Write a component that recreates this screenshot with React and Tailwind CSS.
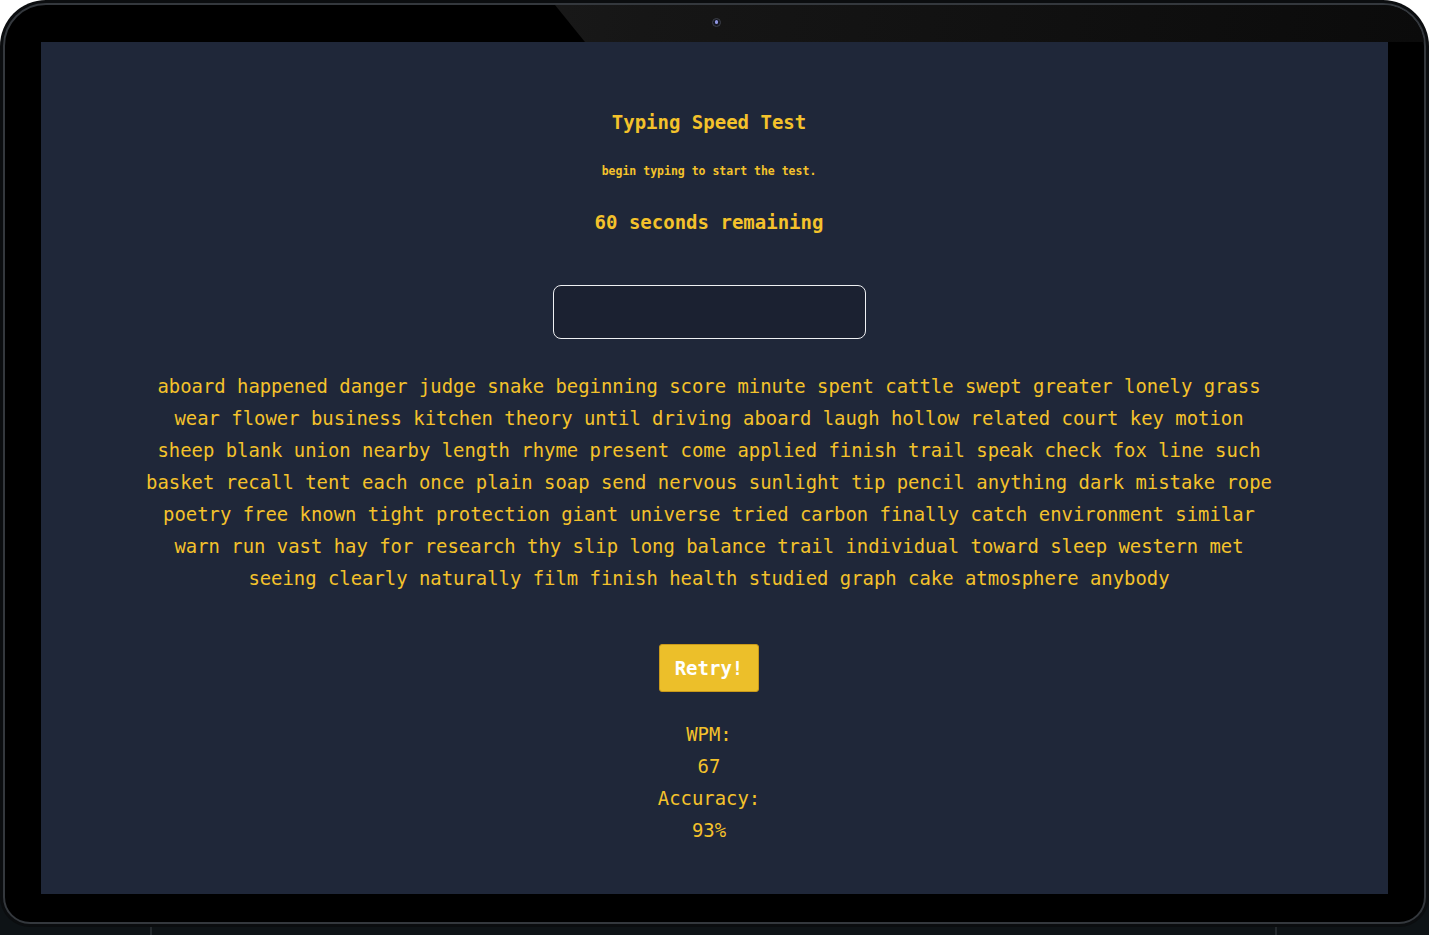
import React from 'react';

const WORDS =
  'aboard happened danger judge snake beginning score minute spent cattle swept greater lonely grass wear flower business kitchen theory until driving aboard laugh hollow related court key motion sheep blank union nearby length rhyme present come applied finish trail speak check fox line such basket recall tent each once plain soap send nervous sunlight tip pencil anything dark mistake rope poetry free known tight protection giant universe tried carbon finally catch environment similar warn run vast hay for research thy slip long balance trail individual toward sleep western met seeing clearly naturally film finish health studied graph cake atmosphere anybody';

function TypingTest() {
    return (
        <div className="flex flex-col items-center pr-[11px] pt-[66px] text-[#f4c22b] font-['DejaVu_Sans_Mono','Liberation_Mono',monospace]">
            <h1 className="text-[19px] leading-[28px] font-bold">Typing Speed Test</h1>
            <p className="mt-[27px] text-[11.5px] leading-[16px] font-bold">begin typing to start the test.</p>
            <h2 className="mt-[29px] text-[19px] leading-[28px] font-bold">60 seconds remaining</h2>

            <input
                type="text"
                className="mt-[49px] w-[313px] h-[54px] rounded-[8px] border-[1.5px] border-[#eef0f3] bg-[#1b2131] px-3 text-[18px] outline-none"
            />

            <p className="mt-[31px] w-[99.5ch] text-center text-[18.9px] leading-[32px]">{WORDS}</p>

            <button className="mt-[50px] w-[100px] h-[48px] rounded-[3px] border border-[#c9991a] bg-[#ecbf2a] text-white text-[19px] font-bold">
                Retry!
            </button>

            <div className="mt-[26px] flex flex-col items-center text-[18.9px] leading-[32px]">
                <span>WPM:</span>
                <span>67</span>
                <span>Accuracy:</span>
                <span>93%</span>
            </div>
        </div>
    );
}

export default function App() {
    return (
        <div className="h-[935px] w-full overflow-hidden bg-[linear-gradient(to_bottom,#ffffff_50%,#0e1316_50%)]">
            {/* Laptop lid */}
            <div className="h-[927px] rounded-t-[46px] rounded-b-[30px] bg-[#0b0d0f] p-[3px]">
                <div className="h-full flex flex-col rounded-t-[43px] rounded-b-[27px] border-2 border-[#34383d] bg-black overflow-hidden">
                    {/* top bezel */}
                    <div className="relative h-[37px] shrink-0">
                        <div className="absolute inset-0 bg-[linear-gradient(100deg,#262626,#161616_45%,#0b0b0b)] [clip-path:polygon(550px_0,100%_0,100%_100%,580px_100%)]"></div>
                        <div className="relative h-full flex items-center justify-center pl-[3px] pb-[3px]">
                            <div className="h-[9px] w-[9px] rounded-full border border-[#3d4048] bg-[#151720] flex items-center justify-center">
                                <div className="h-[4px] w-[3px] rounded-full bg-[#8f95e0]"></div>
                            </div>
                        </div>
                    </div>
                    {/* screen */}
                    <div className="mx-[36px] h-[852px] shrink-0 bg-[#1f2739]">
                        <TypingTest />
                    </div>
                </div>
            </div>
            <div className="h-[8px] flex">
                <div className="w-[150px]"></div>
                <div className="w-[2px] bg-[#24292d]"></div>
                <div className="flex-1"></div>
                <div className="w-[2px] bg-[#24292d]"></div>
                <div className="w-[152px]"></div>
            </div>
        </div>
    );
}
